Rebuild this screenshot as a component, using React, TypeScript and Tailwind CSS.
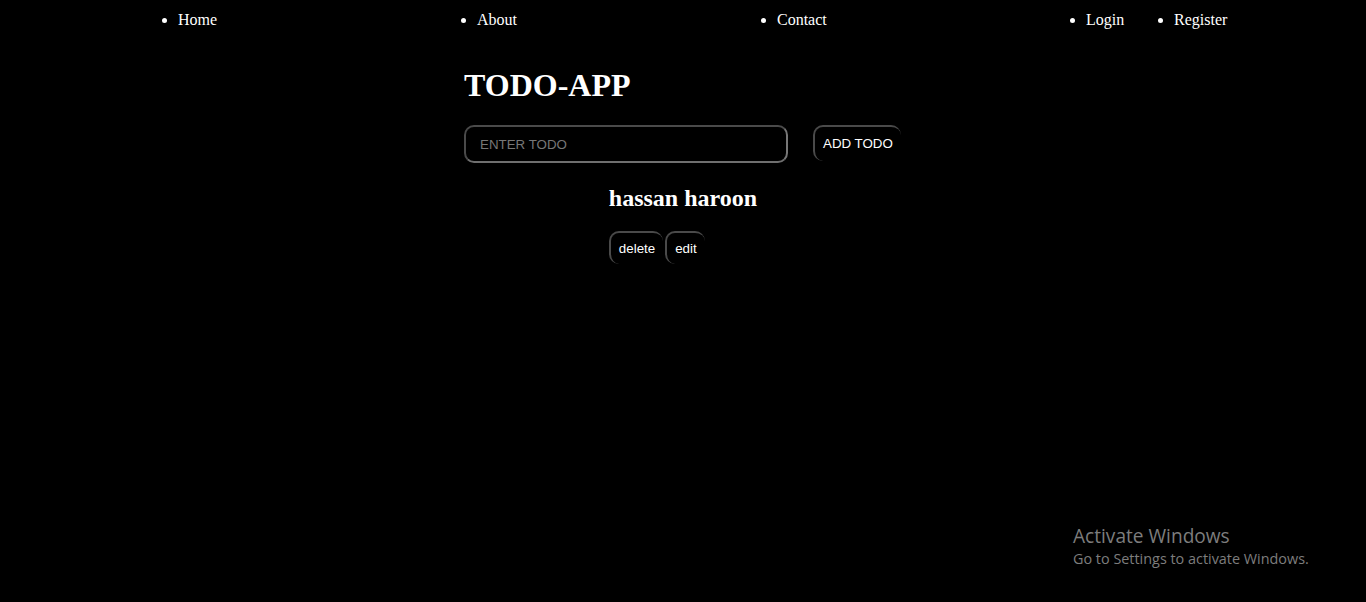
import React from "react";

const serif = { fontFamily: '"Liberation Serif", "Times New Roman", serif' };

export default function App() {
  return (
    <div className="relative h-[602px] w-full overflow-hidden bg-black text-white" style={serif}>
      <nav className="h-[40px]">
        <ul className="flex list-disc pl-[178px] pt-[10px] text-[16px] leading-[20px]">
          <li className="w-[299px]">Home</li>
          <li className="w-[300px]">About</li>
          <li className="w-[309px]">Contact</li>
          <li className="w-[88px]">Login</li>
          <li>Register</li>
        </ul>
      </nav>
      <div className="mx-auto w-[438px]">
        <h1 className="mt-[27px] text-[32px] font-bold leading-[37px]">TODO-APP</h1>
        <div className="mt-[21px] flex items-start">
          <input
            placeholder="ENTER TODO"
            className="h-[38px] w-[324px] rounded-[10px] border-2 border-[#4a4a4a] border-b-[#6f6f6f] border-r-[#777] bg-black px-[14px] text-[13.33px] text-white outline-none placeholder:text-[#777]"
            style={{ fontFamily: '"Liberation Sans", Arial, sans-serif' }}
          />
          <button
            className="ml-[25px] h-[36px] rounded-[10px] border-l-2 border-t-2 border-[#4a4a4a] bg-black pl-[8px] pr-[8px] text-[13.33px] text-white"
            style={{ fontFamily: '"Liberation Sans", Arial, sans-serif' }}
          >
            ADD TODO
          </button>
        </div>
      </div>
      <div className="mt-[21px] flex justify-center">
        <div>
          <h2 className="text-[24px] font-bold leading-[28px]">hassan haroon</h2>
          <div className="mt-[19px] flex gap-[2px]" style={{ fontFamily: '"Liberation Sans", Arial, sans-serif' }}>
            <button className="h-[33px] rounded-[10px] border-l-2 border-t-2 border-[#4a4a4a] bg-black px-[8px] text-[13.33px] text-white">
              delete
            </button>
            <button className="h-[33px] rounded-[10px] border-l-2 border-t-2 border-[#4a4a4a] bg-black px-[8px] text-[13.33px] text-white">
              edit
            </button>
          </div>
        </div>
      </div>
      <div
        className="absolute left-[1073px] top-[523px] text-[#7d7d7d]"
        style={{ fontFamily: '"Open Sans", "Noto Sans", sans-serif' }}
      >
        <div className="text-[19.1px] leading-[26px]">Activate Windows</div>
        <div className="text-[14.4px] leading-[20px]">Go to Settings to activate Windows.</div>
      </div>
    </div>
  );
}
